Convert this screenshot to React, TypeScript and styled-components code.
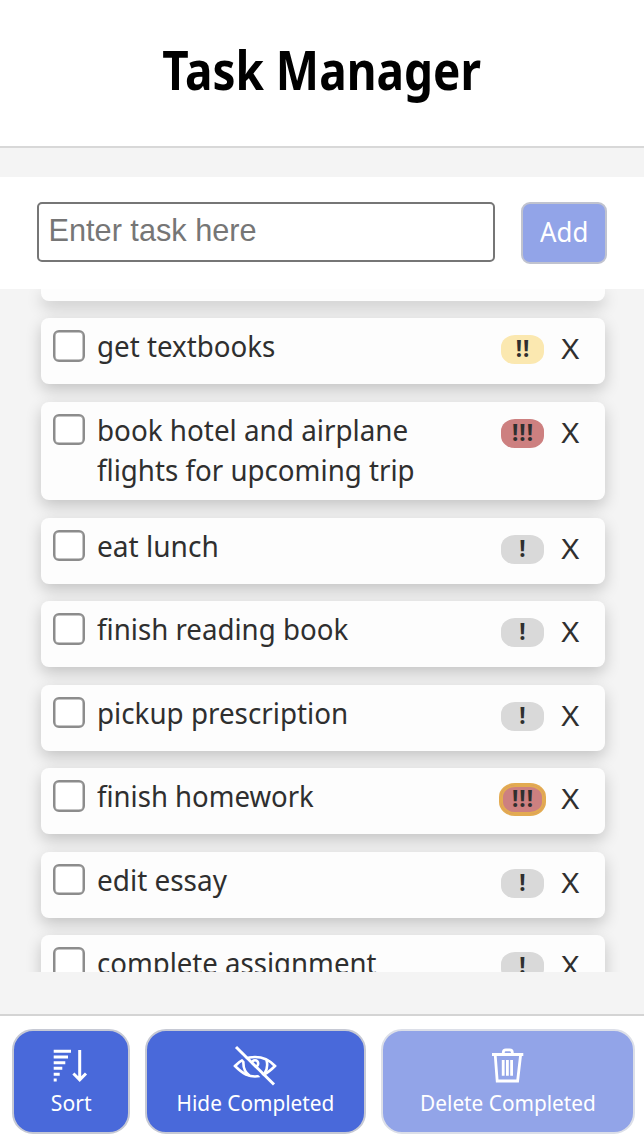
import React from 'react';
import styled, { createGlobalStyle } from 'styled-components';

const Global = createGlobalStyle`
  * { box-sizing: border-box; }
  html, body, #root { height: 100%; margin: 0; }
  body { background: #f4f4f4; font-family: 'Noto Sans', sans-serif; color: #2f2f2f; overflow: hidden; }
  button { font-family: inherit; margin: 0; padding: 0; }
`;

const Screen = styled.div`
  display: flex;
  flex-direction: column;
  height: 1142px;
  width: 644px;
`;

const Header = styled.header`
  height: 148px;
  flex: none;
  display: flex;
  align-items: center;
  justify-content: center;
  padding-bottom: 8px;
  background: #fff;
  border-bottom: 2px solid #d8d8d8;
`;

const Title = styled.h1`
  margin: 0;
  font-size: 54px;
  line-height: 60px;
  font-weight: 700;
  color: #000;
  white-space: nowrap;
`;

const Fit = styled.span<{ $x: number; $origin?: string }>`
  display: inline-block;
  white-space: nowrap;
  transform: scaleX(${(p) => p.$x});
  transform-origin: ${(p) => p.$origin ?? 'center'} center;
`;

const EntryBar = styled.form`
  flex: none;
  display: flex;
  align-items: flex-start;
  gap: 26px;
  height: 112px;
  margin-top: 29px;
  padding: 25px 37px 0;
  background: #fff;
`;

const TaskInput = styled.input`
  width: 459px;
  height: 60px;
  padding: 0 10px 2px 9.5px;
  border: 2px solid #767676;
  border-radius: 5px;
  background: #fff;
  font: 30.7px 'Liberation Sans', sans-serif;
  outline: none;
  &::placeholder { color: #767676; opacity: 1; }
`;

const AddButton = styled.button`
  width: 86px;
  height: 62px;
  padding-bottom: 5px;
  border: 2px solid #c0c3cf;
  border-radius: 9px;
  background: #92a4e8;
  color: #fff;
  font-size: 28px;
`;

const TaskList = styled.ul`
  flex: none;
  height: 683px;
  margin: 0;
  padding: 0 39px 0 41px;
  list-style: none;
  overflow: hidden;
  display: flex;
  flex-direction: column;
  gap: 17.3px;
`;

const Card = styled.li<{ $lines?: number; $tail?: boolean }>`
  flex: none;
  display: flex;
  align-items: flex-start;
  height: ${(p) => (p.$tail ? 11 : p.$lines === 2 ? 98.5 : 66.2)}px;
  padding: 12px 25px 0 12px;
  background: #fdfdfd;
  border-radius: ${(p) => (p.$tail ? '0 0 8px 8px' : '8px')};
  box-shadow: 0 6px 16px rgba(0, 0, 0, 0.2);
`;

const Checkbox = styled.span`
  flex: none;
  width: 31.5px;
  height: 31.5px;
  border: 2px solid #8c8c8c;
  border-radius: 6px;
  background: #fff;
  box-shadow: inset 0 0 0 0.5px #8c8c8c;
`;

const TaskText = styled.div`
  flex: 1;
  margin: -4px 0 0 12.5px;
  font-size: 28.5px;
  line-height: 40px;
`;

const levelColors: Record<number, string> = { 1: '#d9d9d9', 2: '#fbe8b0', 3: '#cd8080' };

const Priority = styled.span<{ $level: number; $focused?: boolean }>`
  flex: none;
  display: flex;
  align-items: center;
  justify-content: center;
  width: 43px;
  height: 29px;
  margin: 5px 16px 0 0;
  padding: 0 0 1px 1px;
  border-radius: 14px / 12px;
  background: ${(p) => levelColors[p.$level]};
  box-shadow: ${(p) => (p.$focused ? '0 0 0 2px #e3ab51, inset 0 0 0 2px #e3ab51' : 'none')};
  font-size: 22.5px;
  font-weight: 700;
  letter-spacing: 1px;
  line-height: 28px;
`;

const Remove = styled.button`
  flex: none;
  width: 20px;
  height: 40px;
  margin-top: -2px;
  border: 0;
  background: none;
  color: #2f2f2f;
  font-size: 28px;
  line-height: 40px;
`;

const Footer = styled.footer`
  display: flex;
  gap: 15px;
  height: 128px;
  margin-top: auto;
  padding: 13px 9px 0 12px;
  background: #fff;
  border-top: 2px solid #d4d4d4;
`;

const Action = styled.button<{ $w: number; $muted?: boolean }>`
  flex: none;
  display: flex;
  flex-direction: column;
  align-items: center;
  width: ${(p) => p.$w}px;
  height: 105px;
  padding-top: 10px;
  border: 2px solid ${(p) => (p.$muted ? '#dcdfe8' : '#c6c9d4')};
  border-radius: 21px;
  background: ${(p) => (p.$muted ? '#92a4e8' : '#4969da')};
  color: #fff;
  font-size: 22px;
  line-height: 30px;
  svg { display: block; flex: none; margin-bottom: 2px; overflow: visible; }
`;

const SortIcon = () => (
  <svg width="44" height="44" viewBox="0 0 44 44" fill="none" stroke="#fff" strokeWidth="3">
    <path d="M4.7 10.3h17.3M4.7 16h14.3M4.7 21.7h11.6M4.7 27.3h8.6M4.7 33.3h6M4.7 39h3" />
    <path d="M30.7 9v30M24.4 32.5l6.3 6.3 6.3-6.3" />
  </svg>
);

const HiddenIcon = () => (
  <svg width="44" height="44" viewBox="0 0 44 44" fill="none" stroke="#fff" strokeWidth="2.6">
    <path d="M2 25C13 13 31 13 42 25C37 30 34 32 31 33.5Q22 37.5 13 33.5Q8 31 2 25Z" />
    <path d="M10.5 19.5Q9.5 29.5 16.5 34.5M33.5 19Q35.5 27 31.5 32.5" />
    <circle cx="22" cy="22.5" r="3.2" />
    <path d="M2 8.7l36 36" stroke="#4969da" strokeWidth="3" />
    <path d="M3 6l38 37.5" strokeWidth="3" />
  </svg>
);

const TrashIcon = () => (
  <svg width="44" height="44" viewBox="0 0 44 44" fill="none" stroke="#fff" strokeWidth="2.8">
    <path d="M6 13.5h31.3M9.2 14l2 26h20.4l3-26M17.3 13v-1.5q0-2.6 2.6-2.6h3.8q2.6 0 2.6 2.6V13" />
    <path d="M17.2 19v15.7M21.4 19v15.7M25.6 19v15.7" />
  </svg>
);

interface Line { text: string; fit: number }
interface Task { lines: Line[]; level: number; focused?: boolean }

const tasks: Task[] = [
  { lines: [{ text: 'get textbooks', fit: 0.973 }], level: 2 },
  { lines: [{ text: 'book hotel and airplane', fit: 0.976 }, { text: 'flights for upcoming trip', fit: 0.972 }], level: 3 },
  { lines: [{ text: 'eat lunch', fit: 0.985 }], level: 1 },
  { lines: [{ text: 'finish reading book', fit: 0.971 }], level: 1 },
  { lines: [{ text: 'pickup prescription', fit: 0.975 }], level: 1 },
  { lines: [{ text: 'finish homework', fit: 0.966 }], level: 3, focused: true },
  { lines: [{ text: 'edit essay', fit: 0.98 }], level: 1 },
  { lines: [{ text: 'complete assignment', fit: 0.968 }], level: 1 },
];

export default function App() {
  return (
    <>
      <Global />
      <Screen>
        <Header><Title><Fit $x={0.85}>Task Manager</Fit></Title></Header>
        <EntryBar onSubmit={(e) => e.preventDefault()}>
          <TaskInput placeholder="Enter task here" />
          <AddButton type="submit"><Fit $x={0.92}>Add</Fit></AddButton>
        </EntryBar>
        <TaskList>
          <Card $tail />
          {tasks.map((t) => (
            <Card key={t.lines[0].text} $lines={t.lines.length}>
              <Checkbox />
              <TaskText>
                {t.lines.map((l) => <div key={l.text}><Fit $x={l.fit} $origin="left">{l.text}</Fit></div>)}
              </TaskText>
              <Priority $level={t.level} $focused={t.focused}>{'!'.repeat(t.level)}</Priority>
              <Remove><Fit $x={1.1}>X</Fit></Remove>
            </Card>
          ))}
        </TaskList>
        <Footer>
          <Action $w={118}><SortIcon /><Fit $x={0.96}>Sort</Fit></Action>
          <Action $w={220.5}><HiddenIcon /><Fit $x={0.945}>Hide Completed</Fit></Action>
          <Action $w={254.5} $muted><TrashIcon /><Fit $x={0.945}>Delete Completed</Fit></Action>
        </Footer>
      </Screen>
    </>
  );
}
